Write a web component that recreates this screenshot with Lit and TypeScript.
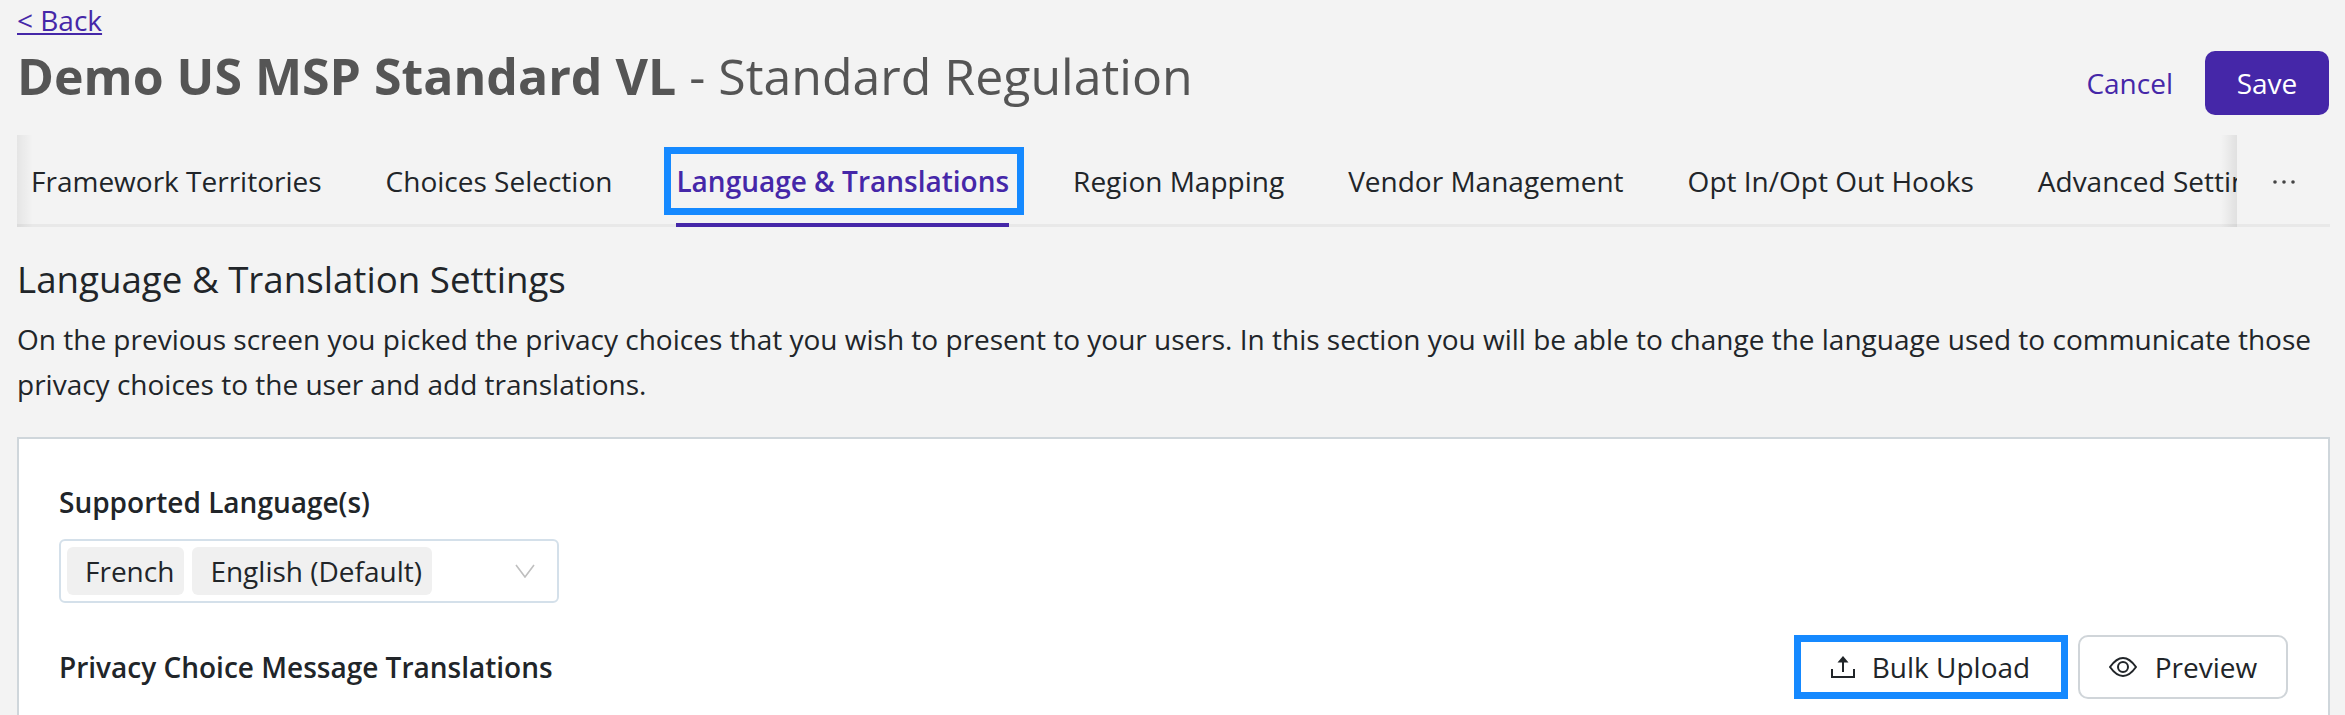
import { LitElement, html, css } from "lit";
import { customElement } from "lit/decorators.js";

const TABS = ["Framework Territories", "Choices Selection", "Language & Translations", "Region Mapping", "Vendor Management", "Opt In/Opt Out Hooks", "Advanced Settings"];

@customElement("app-root")
export class AppRoot extends LitElement {
  static styles = css`
    :host { display: block; width: 2345px; height: 715px; overflow: hidden; background: #f3f3f3; font-family: "Open Sans", sans-serif; color: #212529; box-sizing: border-box; padding: 0 15px 0 17px; }
    a { color: #4527a8; }
    .back { display: block; font-size: 28px; line-height: 31px; height: 41px; margin-top: 5px; }
    .head { display: flex; align-items: flex-start; justify-content: space-between; height: 89px; }
    h1 { margin: 0; font-size: 50px; line-height: 60px; font-weight: 400; color: #555; }
    h1 b { font-weight: 700; }
    .actions { display: flex; align-items: center; gap: 32px; margin-top: 5px; margin-right: 1px; }
    .cancel { font-size: 28px; color: #4527a8; }
    .save { width: 124px; height: 64px; border-radius: 10px; background: #4527a8; color: #fff; font-size: 28px; display: flex; align-items: center; justify-content: center; }
    .tabbar { display: flex; height: 92px; box-shadow: inset 0 -3px #e8e8e8; }
    .tabs { position: relative; width: 2220px; display: flex; gap: 64px; padding-left: 14px; box-sizing: border-box; overflow: hidden; }
    .tabs::before, .tabs::after { content: ""; position: absolute; top: 0; bottom: 0; width: 16px; pointer-events: none; }
    .tabs::before { left: 0; background: linear-gradient(to right, rgba(0,0,0,.06), rgba(0,0,0,0)); }
    .tabs::after { right: 0; background: linear-gradient(to left, rgba(0,0,0,.08), rgba(0,0,0,0)); }
    .tab { position: relative; font-size: 28px; line-height: 92px; white-space: nowrap; color: #212529; flex: none; }
    .tab.active { color: #4527a8; font-weight: 600; }
    .tab.active::before { content: ""; position: absolute; left: -12px; right: -15px; top: 12px; height: 68px; border: 7px solid #1589ff; box-sizing: border-box; }
    .tab.active::after { content: ""; position: absolute; left: 0; right: 0; bottom: 0; height: 4px; background: #4527a8; }
    .more { flex: 1; display: flex; align-items: center; justify-content: center; padding-top: 2px; box-sizing: border-box; }
    h2 { margin: 0; font-size: 36.7px; font-weight: 500; line-height: 44px; padding-top: 30px; color: #212529; }
    p { margin: 16px 0 0; font-size: 28px; line-height: 45px; color: #212529; }
    .card { margin-top: 30px; height: 400px; background: #fff; border: 2px solid #cfd6db; padding: 0 40px; box-sizing: border-box; }
    .label { font-size: 28px; font-weight: 600; line-height: 36px; margin-top: 45px; }
    .select { width: 500px; height: 64px; border: 2px solid #d4e0ea; border-radius: 6px; box-sizing: border-box; margin-top: 19px; display: flex; align-items: center; gap: 8px; padding: 0 6px; }
    .chip { height: 48px; background: #f0f0f0; border-radius: 6px; font-size: 28px; display: flex; align-items: center; padding: 0 10px 0 18px; }
    .chev { margin-left: auto; margin-right: 16px; }
    .row { display: flex; align-items: center; margin-top: 32px; }
    .row .label { margin: 0; flex: 1; }
    .btn { height: 64px; box-sizing: border-box; display: flex; align-items: center; justify-content: center; gap: 18px; font-size: 28px; background: #fff; }
    .upload { width: 274px; border: 7px solid #1589ff; gap: 17px; padding-right: 1px; }
    .preview { width: 210px; border: 2px solid #d0d5d9; border-radius: 10px; margin-left: 10px; }
  `;
  render() {
    return html`
      <a class="back" href="#">&lt; Back</a>
      <div class="head">
        <h1><b>Demo US MSP Standard VL</b> - Standard Regulation</h1>
        <div class="actions"><span class="cancel">Cancel</span><span class="save">Save</span></div>
      </div>
      <div class="tabbar">
        <div class="tabs">${TABS.map((t, i) => html`<div class="tab ${i === 2 ? "active" : ""}">${t}</div>`)}</div>
        <div class="more">
          <svg width="22" height="4" viewBox="0 0 22 4" fill="#444"><circle cx="2" cy="2" r="1.800"/><circle cx="11" cy="2" r="1.800"/><circle cx="20" cy="2" r="1.800"/></svg>
        </div>
      </div>
      <h2>Language &amp; Translation Settings</h2>
      <p>On the previous screen you picked the privacy choices that you wish to present to your users. In this section you will be able to change the language used to communicate those privacy choices to the user and add translations.</p>
      <div class="card">
        <div class="label">Supported Language(s)</div>
        <div class="select">
          <span class="chip">French</span><span class="chip">English (Default)</span>
          <svg class="chev" width="20" height="14" viewBox="0 0 20 14" fill="none" stroke="#bfbfbf" stroke-width="1.6"><path d="M1 1l9 12 9-12"/></svg>
        </div>
        <div class="row">
          <div class="label">Privacy Choice Message Translations</div>
          <div class="btn upload">
            <svg width="24" height="22" viewBox="0 0 24 22"><path d="M1 13v8h22v-8" fill="none" stroke="#212529" stroke-width="2"/><path d="M12 5v11" fill="none" stroke="#212529" stroke-width="2"/><path d="M12 0l5.500 6.500h-11z" fill="#212529"/></svg>
            <span>Bulk Upload</span>
          </div>
          <div class="btn preview">
            <svg width="28" height="20" viewBox="0 0 28 20" fill="none" stroke="#212529" stroke-width="2"><path d="M1 10C6 3 10 1 14 1s8 2 13 9c-5 7-9 9-13 9S6 17 1 10z"/><circle cx="14" cy="10" r="5"/></svg>
            <span>Preview</span>
          </div>
        </div>
      </div>
    `;
  }
}
